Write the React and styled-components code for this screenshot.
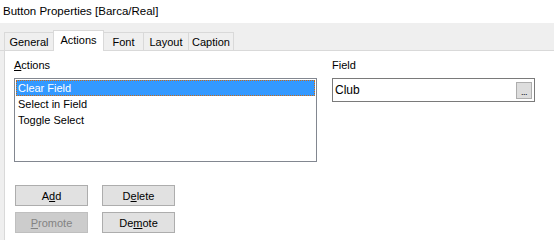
import styled, { createGlobalStyle } from "styled-components";

const GlobalStyle = createGlobalStyle`
  html, body {
    margin: 0;
    padding: 0;
    background: #ffffff;
  }
  body {
    font-family: "Liberation Sans", Arial, sans-serif;
    font-size: 11px;
    color: #000000;
  }
`;

const tabs = [
  { label: "General", width: 50 },
  { label: "Actions", width: 51, active: true },
  { label: "Font", width: 41 },
  { label: "Layout", width: 46 },
  { label: "Caption", width: 46 },
];

const actions = ["Clear Field", "Select in Field", "Toggle Select"];

const App = () => {
  return (
    <>
      <GlobalStyle />
      <Window>
        <TitleBar>Button Properties [Barca/Real]</TitleBar>
        <TabStrip>
          {tabs.map((t) => (
            <Tab key={t.label} $width={t.width} $active={t.active}>
              {t.label}
            </Tab>
          ))}
        </TabStrip>
        <Body>
          <Panel>
            <TopRow>
              <ActionsColumn>
                <Label>
                  <u>A</u>ctions
                </Label>
                <ListBox>
                  {actions.map((a, i) => (
                    <ListItem key={a} $selected={i === 0}>
                      {a}
                    </ListItem>
                  ))}
                </ListBox>
              </ActionsColumn>
              <FieldColumn>
                <Label>Field</Label>
                <TextBox>
                  <span>Club</span>
                  <BrowseButton>...</BrowseButton>
                </TextBox>
              </FieldColumn>
            </TopRow>
            <ButtonGrid>
              <Button>
                A<u>d</u>d
              </Button>
              <Button>
                D<u>e</u>lete
              </Button>
              <Button disabled>
                <u>P</u>romote
              </Button>
              <Button>
                De<u>m</u>ote
              </Button>
            </ButtonGrid>
          </Panel>
        </Body>
      </Window>
    </>
  );
};

const Window = styled.div`
  width: 554px;
  height: 240px;
  overflow: hidden;
  display: flex;
  flex-direction: column;
  background: #ffffff;
`;

const TitleBar = styled.div`
  height: 23px;
  display: flex;
  align-items: center;
  padding-left: 3px;
  padding-bottom: 2px;
  box-sizing: border-box;
  font-size: 11.5px;
  color: #000000;
`;

const TabStrip = styled.div`
  height: 28px;
  box-sizing: border-box;
  background: #efefef;
  border-bottom: 1px solid #d9d9d9;
  display: flex;
  align-items: flex-end;
  padding-left: 4px;
`;

const Tab = styled.div`
  position: relative;
  width: ${(p) => p.$width}px;
  height: ${(p) => (p.$active ? 21 : 18)}px;
  margin-bottom: ${(p) => (p.$active ? -1 : 0)}px;
  margin-left: -1px;
  box-sizing: border-box;
  border: 1px solid #d9d9d9;
  border-bottom: none;
  background: ${(p) => (p.$active ? "#ffffff" : "#efefef")};
  z-index: ${(p) => (p.$active ? 1 : 0)};
  display: flex;
  align-items: ${(p) => (p.$active ? "flex-start" : "center")};
  justify-content: center;
  padding-top: ${(p) => (p.$active ? 3 : 0)}px;
  font-size: 11px;

  &:first-child {
    margin-left: 0;
  }
`;

const Body = styled.div`
  flex: 1;
  display: flex;
  background: #efefef;
  padding-left: 4px;
`;

const Panel = styled.div`
  flex: 1;
  background: #ffffff;
  border-left: 1px solid #d9d9d9;
  padding: 7px 0 0 9px;
  display: flex;
  flex-direction: column;
`;

const TopRow = styled.div`
  display: flex;
  gap: 15px;
`;

const ActionsColumn = styled.div`
  width: 303px;
  display: flex;
  flex-direction: column;
  gap: 5px;
`;

const FieldColumn = styled.div`
  width: 203px;
  display: flex;
  flex-direction: column;
  gap: 5px;
`;

const Label = styled.div`
  height: 15px;
  line-height: 15px;
  font-size: 11px;
`;

const ListBox = styled.div`
  height: 84px;
  box-sizing: border-box;
  border: 1px solid #828790;
  padding: 1px;
  display: flex;
  flex-direction: column;
`;

const ListItem = styled.div`
  height: 16px;
  line-height: 16px;
  padding-left: 2px;
  box-sizing: border-box;
  background: ${(p) => (p.$selected ? "#3399ff" : "transparent")};
  color: ${(p) => (p.$selected ? "#ffffff" : "#000000")};
  outline: ${(p) => (p.$selected ? "1px dotted #cc6a14" : "none")};
  outline-offset: -1px;
`;

const TextBox = styled.div`
  height: 24px;
  box-sizing: border-box;
  border: 1px solid #7a7a7a;
  display: flex;
  align-items: center;
  justify-content: space-between;
  padding: 0 2px 0 2px;

  span {
    font-size: 12px;
  }
`;

const BrowseButton = styled.div`
  width: 16px;
  height: 17px;
  box-sizing: border-box;
  background: #dddddd;
  border: 1px solid #adadad;
  display: flex;
  align-items: flex-end;
  justify-content: center;
  font-size: 9px;
  line-height: 11px;
  letter-spacing: -0.5px;
`;

const ButtonGrid = styled.div`
  margin-top: 23px;
  margin-left: 1px;
  display: grid;
  grid-template-columns: 73px 73px;
  column-gap: 14px;
  row-gap: 6px;
`;

const Button = styled.button`
  height: 21px;
  box-sizing: border-box;
  padding: 0;
  font-family: "Liberation Sans", Arial, sans-serif;
  font-size: 11px;
  color: #000000;
  background: #e1e1e1;
  border: 1px solid #adadad;
  border-radius: 0;

  &:disabled {
    background: #cccccc;
    border-color: #bfbfbf;
    color: #838383;
  }
`;

export default App;
